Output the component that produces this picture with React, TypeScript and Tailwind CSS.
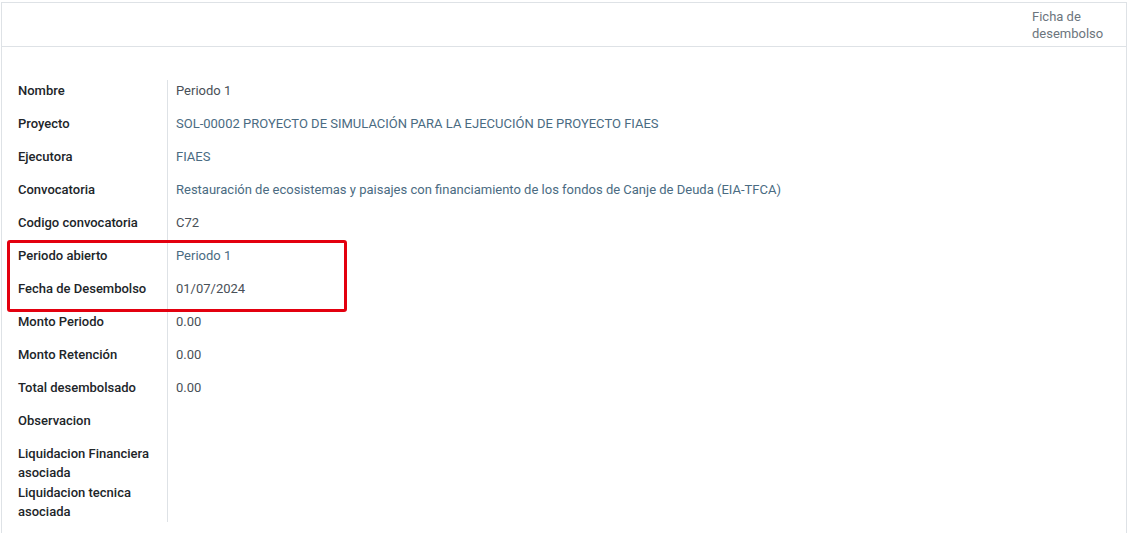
const rows: { label: string; value?: string; link?: boolean; tight?: boolean }[] = [
  { label: "Nombre", value: "Periodo 1" },
  { label: "Proyecto", value: "SOL-00002 PROYECTO DE SIMULACIÓN PARA LA EJECUCIÓN DE PROYECTO FIAES", link: true },
  { label: "Ejecutora", value: "FIAES", link: true },
  {
    label: "Convocatoria",
    value: "Restauración de ecosistemas y paisajes con financiamiento de los fondos de Canje de Deuda (EIA-TFCA)",
    link: true,
  },
  { label: "Codigo convocatoria", value: "C72" },
  { label: "Periodo abierto", value: "Periodo 1", link: true },
  { label: "Fecha de Desembolso", value: "01/07/2024" },
  { label: "Monto Periodo", value: "0.00" },
  { label: "Monto Retención", value: "0.00" },
  { label: "Total desembolsado", value: "0.00" },
  { label: "Observacion" },
  { label: "Liquidacion Financiera asociada", tight: true },
  { label: "Liquidacion tecnica asociada", tight: true },
]

export default function App() {
  return (
    <div className="w-[1128px] h-[533px] bg-white overflow-hidden pt-[2px] pl-[1px] font-['Roboto',sans-serif]">
      <div className="relative w-[1126px] h-[540px] border border-[#dee2e6] border-b-0">
        <div className="h-[44px] border-b border-[#dee2e6] flex justify-end pr-[20px] pt-[5px]">
          <div className="w-[74px] text-[13px] leading-[17px] text-[#6c757d]">Ficha de desembolso</div>
        </div>

        <div className="mt-[33px] ml-[16px] grid grid-cols-[150px_1fr]">
          {rows.map((r) => (
            <div key={r.label} className="contents">
              <div
                className={`pr-2 border-r border-[#dee2e6] text-[13px] leading-[19px] font-medium text-[#212529] ${
                  r.tight ? "pb-[1px]" : "pb-[14px]"
                } ${r.label === "Nombre" ? "pt-[1px]" : ""}`}
              >
                {r.label}
              </div>
              <div
                className={`pl-2 text-[13px] leading-[19px] ${r.label === "Nombre" ? "pt-[1px]" : ""} ${
                  r.link ? "text-[#4a6b82]" : "text-[#495057]"
                }`}
              >
                {r.value}
              </div>
            </div>
          ))}
        </div>

        {/* annotation */}
        <div className="absolute left-[5px] top-[237px] w-[340px] h-[72px] border-[3px] border-[#e3000f] rounded-[3px]" />
      </div>
    </div>
  )
}
